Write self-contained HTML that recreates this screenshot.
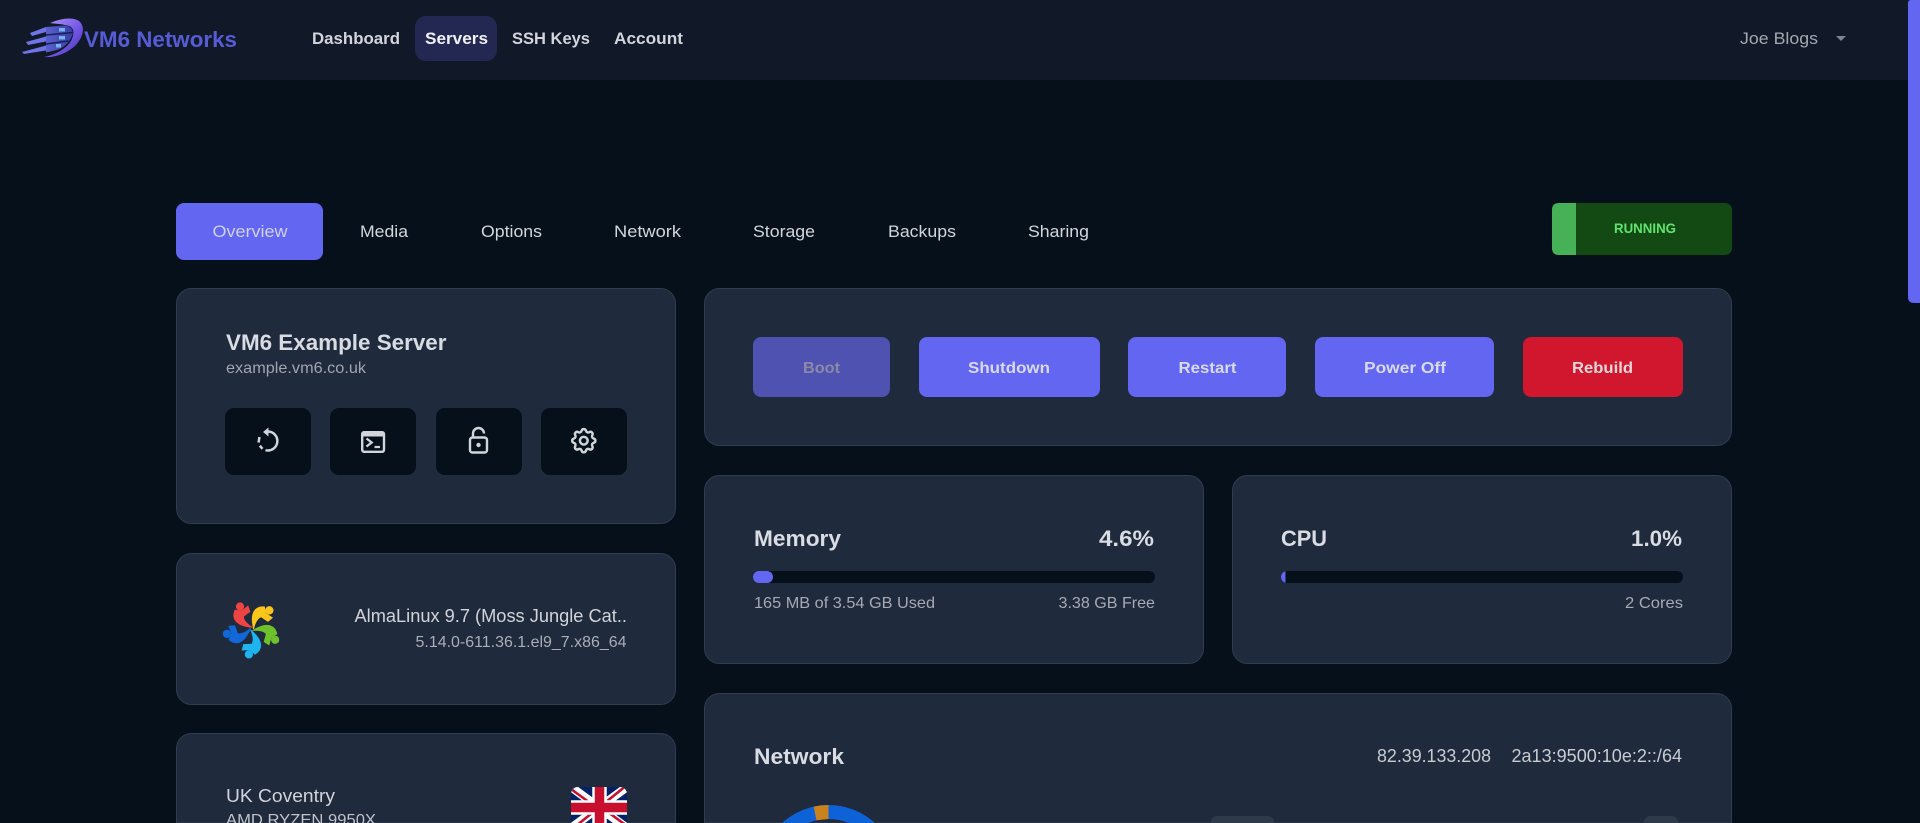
<!DOCTYPE html>
<html lang="en">
<head>
<meta charset="utf-8">
<title>VM6 Networks - Server Overview</title>
<style>
html,body{margin:0;padding:0;width:1920px;height:823px;overflow:hidden;background:#05101a;font-family:"Liberation Sans",sans-serif}
svg{position:absolute;left:0;top:0;display:block}
text{font-family:"Liberation Sans",sans-serif}
</style>
</head>
<body>
<svg width="1920" height="823" viewBox="0 0 1920 823" xmlns="http://www.w3.org/2000/svg">
<defs>
<clipPath id="flagclip"><rect x="571" y="787" width="56" height="41" rx="7"/></clipPath>
<clipPath id="bar2"><rect x="1281" y="571" width="402" height="12" rx="6"/></clipPath>
<linearGradient id="cres" x1="0" y1="0" x2="1" y2="1"><stop offset="0" stop-color="#b39af7"/><stop offset=".5" stop-color="#7a5ce8"/><stop offset="1" stop-color="#3f2fb8"/></linearGradient>
<linearGradient id="srv" x1="0" y1="0" x2="1" y2="0"><stop offset="0" stop-color="#5a60cc"/><stop offset="1" stop-color="#3540a8"/></linearGradient>
<path id="alma" d="M235 610 C231.500 618 235 626 252.500 627.500 C247 624 243.500 620 243.500 616.500 L250 611.500 L248 606 L241.500 611 Z"/>
</defs>

<rect width="1920" height="823" fill="#05101a"/>

<!-- navbar -->
<rect width="1920" height="80" fill="#111827"/>
<rect x="415" y="16" width="82" height="45" rx="11" fill="#232852"/>

<!-- logo -->
<g>
<path d="M50 23 C62 18 73 17 79 21 C86 27 83 38 75 46 C66 54 54 58 44 57 C55 55 66 49 71 41 C75 33 74 28 69 26 C63 24 57 24 50 23 Z" fill="url(#cres)"/>
<path d="M46 27 L65 25.500 C72 26.500 74 31 72 36 C69 43 63 48 57 50 L46 52.500 Z" fill="url(#srv)"/>
<path d="M46 35 L73 32.500 M46 44 L68.500 41" stroke="#1a2158" stroke-width="1.500"/>
<path d="M30 33 L46 27 L46 32 L32 36 Z M26 42 L46 36.500 L46 41.500 L28 45 Z M22 52 L46 45.500 L46 50.500 L24 54 Z" fill="#6f74e6"/>
<rect x="59" y="28" width="6" height="3.500" fill="#7bb0ee"/><rect x="59" y="36" width="6" height="3.500" fill="#7bb0ee"/><rect x="56" y="44" width="5" height="3.500" fill="#7bb0ee"/>
</g>
<text x="84" y="47" font-size="22" font-weight="700" fill="#575bd4" textLength="153" lengthAdjust="spacingAndGlyphs">VM6 Networks</text>

<!-- nav -->
<g font-size="17" font-weight="700" fill="#d2d5db">
<text x="312" y="44" textLength="88" lengthAdjust="spacingAndGlyphs">Dashboard</text>
<text x="425" y="44" textLength="63" lengthAdjust="spacingAndGlyphs" fill="#f1f2f5">Servers</text>
<text x="512" y="44" textLength="78" lengthAdjust="spacingAndGlyphs">SSH Keys</text>
<text x="614" y="44" textLength="69" lengthAdjust="spacingAndGlyphs">Account</text>
</g>
<text x="1740" y="44" font-size="17" fill="#a4a8b0" textLength="78" lengthAdjust="spacingAndGlyphs">Joe Blogs</text>
<path d="M1836 36 L1846 36 L1841 41 Z" fill="#7f8490"/>

<!-- scrollbar -->
<path d="M1908 3 Q1908 0 1911 0 L1920 0 L1920 303 L1914 303 Q1908 303 1908 297 Z" fill="#6366f1"/>

<!-- tabs -->
<rect x="176" y="203" width="147" height="57" rx="8" fill="#6366f1"/>
<g font-size="17" fill="#d3d6dc">
<text x="212.500" y="237" textLength="75" lengthAdjust="spacingAndGlyphs" fill="#cfd2f0">Overview</text>
<text x="360" y="237" textLength="48" lengthAdjust="spacingAndGlyphs">Media</text>
<text x="481" y="237" textLength="61" lengthAdjust="spacingAndGlyphs">Options</text>
<text x="614" y="237" textLength="67" lengthAdjust="spacingAndGlyphs">Network</text>
<text x="753" y="237" textLength="62" lengthAdjust="spacingAndGlyphs">Storage</text>
<text x="888" y="237" textLength="68" lengthAdjust="spacingAndGlyphs">Backups</text>
<text x="1028" y="237" textLength="61" lengthAdjust="spacingAndGlyphs">Sharing</text>
</g>

<!-- status -->
<rect x="1552" y="203" width="180" height="52" rx="7" fill="#134a14"/>
<path d="M1576 203 L1559 203 Q1552 203 1552 210 L1552 248 Q1552 255 1559 255 L1576 255 Z" fill="#46b156"/>
<text x="1614" y="233" font-size="14" font-weight="700" fill="#5fe36f" textLength="62" lengthAdjust="spacingAndGlyphs">RUNNING</text>

<!-- cards -->
<g fill="#1f2a3c" stroke="#303c50" stroke-width="1">
<rect x="176.500" y="288.500" width="499" height="235" rx="15"/>
<rect x="176.500" y="553.500" width="499" height="151" rx="15"/>
<path d="M176.500 823 V748.500 A15 15 0 0 1 191.500 733.500 H660.500 A15 15 0 0 1 675.500 748.500 V823 Z"/>
<rect x="704.500" y="288.500" width="1027" height="157" rx="15"/>
<rect x="704.500" y="475.500" width="499" height="188" rx="15"/>
<rect x="1232.500" y="475.500" width="499" height="188" rx="15"/>
<path d="M704.500 823 V708.500 A15 15 0 0 1 719.500 693.500 H1716.500 A15 15 0 0 1 1731.500 708.500 V823 Z"/>
</g>

<!-- server card -->
<text x="226" y="350" font-size="22" font-weight="700" fill="#d9dce2" textLength="220.500" lengthAdjust="spacingAndGlyphs">VM6 Example Server</text>
<text x="226" y="373" font-size="16" fill="#a0a5ae" textLength="140" lengthAdjust="spacingAndGlyphs">example.vm6.co.uk</text>
<g fill="#05101a">
<rect x="225" y="408" width="86" height="67" rx="9"/>
<rect x="330" y="408" width="86" height="67" rx="9"/>
<rect x="436" y="408" width="86" height="67" rx="9"/>
<rect x="541" y="408" width="86" height="67" rx="9"/>
</g>
<!-- refresh icon -->
<g fill="none" stroke="#d1d5db" stroke-width="2.500">
<path d="M268 431.500 A9.500 9.500 0 1 1 265.500 450.200"/>
<path d="M262.500 448.800 L259.800 445.750"/>
<path d="M258.600 442.600 L259.400 437"/>
</g>
<path d="M263 432 L268.500 427.500 L268.500 436.500 Z" fill="#d1d5db"/>
<!-- terminal icon -->
<g>
<rect x="362.200" y="432.200" width="21.800" height="19.600" rx="2" fill="none" stroke="#d1d5db" stroke-width="2.400"/>
<rect x="362" y="431.500" width="22" height="5" fill="#d1d5db"/>
<path d="M366.500 438.500 L371.700 442.500 L366.500 446.500" fill="none" stroke="#d1d5db" stroke-width="2.300"/>
<path d="M374.500 447 L380 447" stroke="#d1d5db" stroke-width="2.200"/>
</g>
<!-- lock-open icon -->
<g fill="none" stroke="#d1d5db" stroke-width="2.400">
<rect x="470" y="437.500" width="17" height="15" rx="2.500"/>
<path d="M473 437 L473 433.500 A5.500 5.500 0 0 1 484 433.500"/>
</g>
<circle cx="478.500" cy="445" r="2.200" fill="#d1d5db"/>
<!-- gear icon -->
<g transform="translate(568.300 425.200) scale(1.290)" fill="none" stroke="#d1d5db" stroke-width="1.900">
<path d="M10.325 4.317c.426-1.756 2.924-1.756 3.35 0a1.724 1.724 0 0 0 2.573 1.066c1.543-.94 3.31.826 2.37 2.37a1.724 1.724 0 0 0 1.065 2.572c1.756.426 1.756 2.924 0 3.35a1.724 1.724 0 0 0-1.066 2.573c.94 1.543-.826 3.31-2.37 2.37a1.724 1.724 0 0 0-2.572 1.065c-.426 1.756-2.924 1.756-3.35 0a1.724 1.724 0 0 0-2.573-1.066c-1.543.94-3.31-.826-2.37-2.37a1.724 1.724 0 0 0-1.065-2.572c-1.756-.426-1.756-2.924 0-3.35a1.724 1.724 0 0 0 1.066-2.573c-.94-1.543.826-3.31 2.37-2.37 1 .608 2.296.07 2.572-1.065z"/>
<circle cx="12" cy="12" r="3"/>
</g>

<!-- OS card -->
<g stroke-width=".7">
<g fill="#ef4444" stroke="#ef4444"><circle cx="240" cy="606.500" r="3.800"/><use href="#alma"/></g>
<g fill="#fbc51a" stroke="#fbc51a" transform="rotate(71 252 629)"><circle cx="240" cy="606.500" r="3.800"/><use href="#alma"/></g>
<g fill="#6fc12c" stroke="#6fc12c" transform="rotate(143 252 629)"><circle cx="240" cy="606.500" r="3.800"/><use href="#alma"/></g>
<g fill="#1eb4f0" stroke="#1eb4f0" transform="rotate(215 252 629)"><circle cx="240" cy="606.500" r="3.800"/><use href="#alma"/></g>
<g fill="#1268d8" stroke="#1268d8" transform="rotate(287 252 629)"><circle cx="240" cy="606.500" r="3.800"/><use href="#alma"/></g>
</g>
<text x="354.500" y="622" font-size="18" fill="#d1d4da" textLength="272.500" lengthAdjust="spacingAndGlyphs">AlmaLinux 9.7 (Moss Jungle Cat..</text>
<text x="415.500" y="647" font-size="16" fill="#aaaeb6" textLength="211" lengthAdjust="spacingAndGlyphs">5.14.0-611.36.1.el9_7.x86_64</text>

<!-- location card -->
<text x="226" y="802" font-size="18" fill="#d1d4da" textLength="109" lengthAdjust="spacingAndGlyphs">UK Coventry</text>
<text x="226" y="825" font-size="16" fill="#c0c3c9" textLength="150" lengthAdjust="spacingAndGlyphs">AMD RYZEN 9950X</text>
<g clip-path="url(#flagclip)">
<rect x="571" y="787" width="56" height="41" fill="#012169"/>
<path d="M571 787 L627 828 M627 787 L571 828" stroke="#fff" stroke-width="8.500"/>
<path d="M571 789 L597 808 M627 785 L601 806 M571 830 L597 809 M627 826 L601 807" stroke="#c8102e" stroke-width="2.600"/>
<path d="M599.500 787 V828 M571 807.500 H627" stroke="#fff" stroke-width="14.500"/>
<path d="M599.500 787 V828 M571 807.500 H627" stroke="#c8102e" stroke-width="9.500"/>
</g>

<!-- action buttons -->
<rect x="753" y="337" width="137" height="60" rx="8" fill="#4f52b0"/>
<rect x="919" y="337" width="181" height="60" rx="8" fill="#6366f1"/>
<rect x="1128" y="337" width="158" height="60" rx="8" fill="#6366f1"/>
<rect x="1315" y="337" width="179" height="60" rx="8" fill="#6366f1"/>
<rect x="1523" y="337" width="160" height="60" rx="8" fill="#d0172e"/>
<g font-size="16" font-weight="700" fill="#d8daf3">
<text x="803" y="373" fill="#8a8aa6" textLength="37" lengthAdjust="spacingAndGlyphs">Boot</text>
<text x="968" y="373" textLength="82" lengthAdjust="spacingAndGlyphs">Shutdown</text>
<text x="1178.500" y="373" textLength="58" lengthAdjust="spacingAndGlyphs">Restart</text>
<text x="1364" y="373" textLength="82" lengthAdjust="spacingAndGlyphs">Power Off</text>
<text x="1572" y="373" textLength="61" lengthAdjust="spacingAndGlyphs" fill="#ecd6da">Rebuild</text>
</g>

<!-- memory -->
<text x="754" y="546" font-size="22" font-weight="700" fill="#d9dce2" textLength="87" lengthAdjust="spacingAndGlyphs">Memory</text>
<text x="1099" y="546" font-size="22" font-weight="700" fill="#d9dce2" textLength="55" lengthAdjust="spacingAndGlyphs">4.6%</text>
<rect x="753" y="571" width="402" height="12" rx="6" fill="#05101a"/>
<rect x="753" y="571" width="20" height="12" rx="6" fill="#6366f1"/>
<text x="754" y="608" font-size="16" fill="#a6aab2" textLength="181" lengthAdjust="spacingAndGlyphs">165 MB of 3.54 GB Used</text>
<text x="1058.500" y="608" font-size="16" fill="#a6aab2" textLength="96.500" lengthAdjust="spacingAndGlyphs">3.38 GB Free</text>

<!-- cpu -->
<text x="1281" y="546" font-size="22" font-weight="700" fill="#d9dce2" textLength="46" lengthAdjust="spacingAndGlyphs">CPU</text>
<text x="1631" y="546" font-size="22" font-weight="700" fill="#d9dce2" textLength="51" lengthAdjust="spacingAndGlyphs">1.0%</text>
<rect x="1281" y="571" width="402" height="12" rx="6" fill="#05101a"/>
<rect x="1281" y="571" width="4.500" height="12" fill="#6366f1" clip-path="url(#bar2)"/>
<text x="1625" y="608" font-size="16" fill="#a6aab2" textLength="58" lengthAdjust="spacingAndGlyphs">2 Cores</text>

<!-- network -->
<text x="754" y="764" font-size="22" font-weight="700" fill="#d9dce2" textLength="90" lengthAdjust="spacingAndGlyphs">Network</text>
<text x="1377" y="762" font-size="18" fill="#c8cbd1" textLength="114" lengthAdjust="spacingAndGlyphs">82.39.133.208</text>
<text x="1511.500" y="762" font-size="18" fill="#c8cbd1" textLength="170.500" lengthAdjust="spacingAndGlyphs">2a13:9500:10e:2::/64</text>
<circle cx="828.500" cy="874" r="62" fill="none" stroke="#0e62d8" stroke-width="14"/>
<path d="M828.500 805 L828.500 819 L816.500 820.300 L813.600 806.600 A69 69 0 0 1 828.500 805 Z" fill="#c9821c"/>
<path d="M1211 823 V822 A6 6 0 0 1 1217 816 H1268 A6 6 0 0 1 1274 822 V823 Z" fill="#2e3949"/>
<path d="M1644 823 V822 A6 6 0 0 1 1650 816 H1672 A6 6 0 0 1 1678 822 V823 Z" fill="#2e3949"/>
</svg>
</body>
</html>
